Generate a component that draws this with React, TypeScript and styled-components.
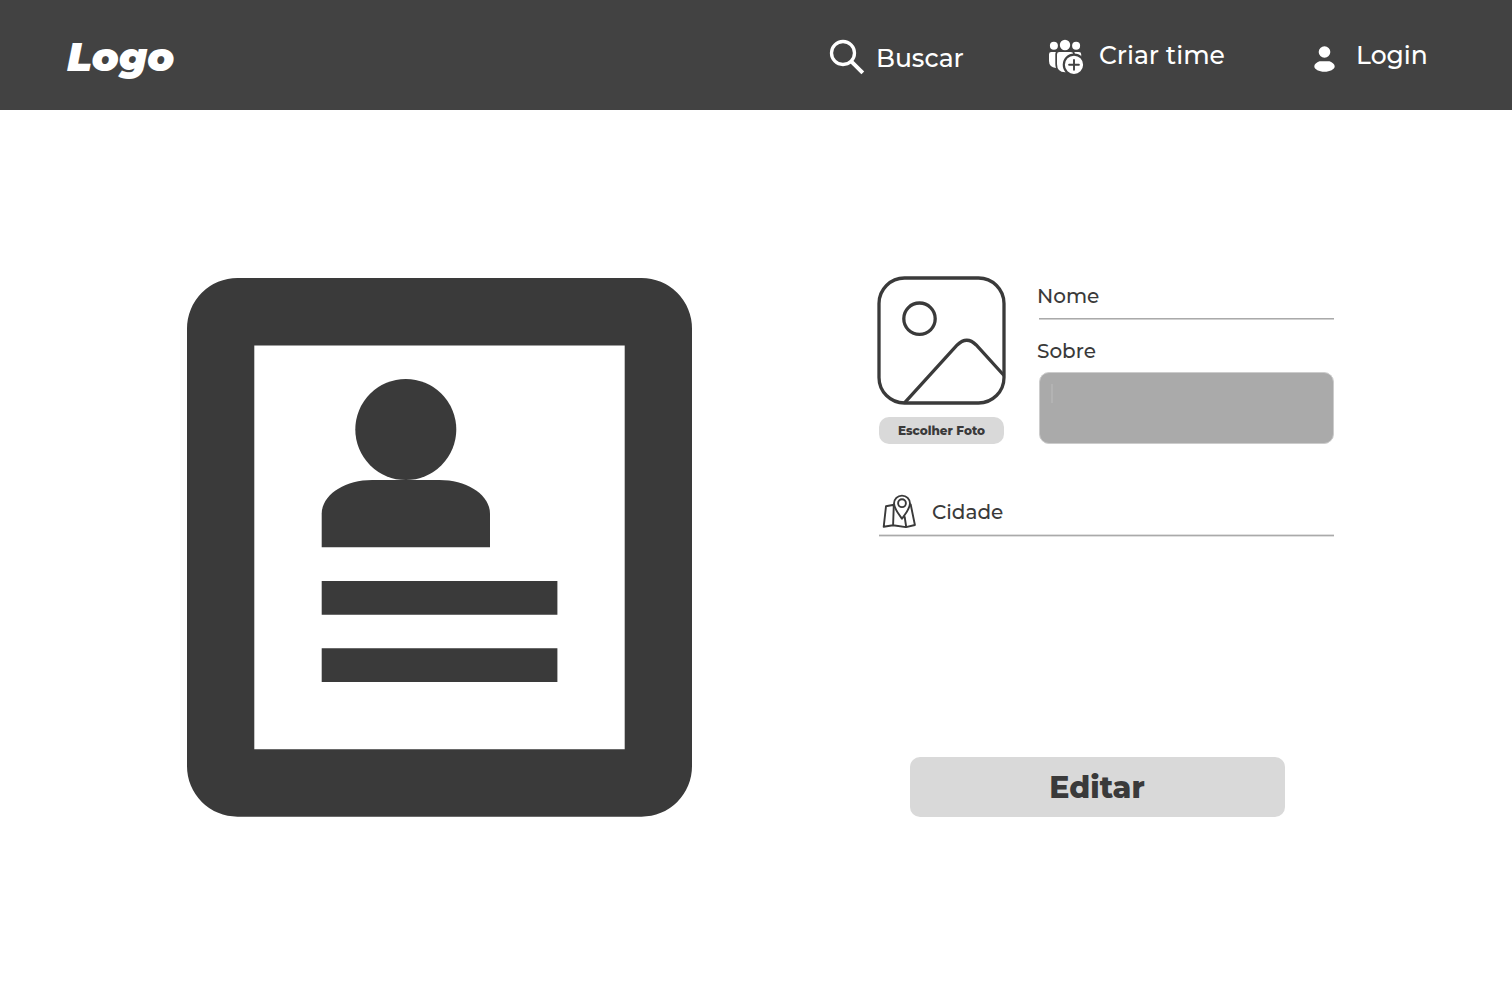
import React from "react";
import styled, { createGlobalStyle } from "styled-components";

const GlobalStyle = createGlobalStyle`
  * { box-sizing: border-box; }
  body { margin: 0; background: #fff; color: #3a3a3a; font-family: Montserrat, Inter, "Liberation Sans", sans-serif; }
`;

const Page = styled.div`
  width: 1512px;
  height: 982px;
  overflow: hidden;
  background: #fff;
`;

const Header = styled.header`
  display: flex;
  align-items: flex-start;
  height: 110px;
  padding: 0 85px 0 67px;
  background: #424242;
  color: #fff;
`;

const Logo = styled.div`
  margin-top: 32px;
  font-size: 40px;
  line-height: 49px;
  font-weight: 900;
  font-style: italic;
`;

const Nav = styled.nav`
  display: flex;
  margin-left: auto;
`;

const NavItem = styled.a<{ $width: number; $gap: number; $top: number }>`
  display: flex;
  align-items: flex-start;
  width: ${(p) => p.$width}px;
  gap: ${(p) => p.$gap}px;
  color: #fff;

  svg { flex: none; margin-top: 38px; }
  span {
    margin-top: ${(p) => p.$top}px;
    font-size: 25px;
    font-weight: 500;
    line-height: 32px;
    white-space: nowrap;
  }
`;

const Main = styled.main`
  display: flex;
  align-items: flex-start;
  padding: 166px 178px 0 187px;
  justify-content: space-between;
`;

const Card = styled.div`
  width: 505px;
  height: 539px;
  margin-top: 2px;
  svg { display: block; }
`;

const Form = styled.form`
  display: flex;
  flex-direction: column;
  width: 457px;
`;

const TopRow = styled.div`
  display: flex;
  gap: 31px;
`;

const PhotoColumn = styled.div`
  display: flex;
  flex-direction: column;
  align-items: center;
  width: 129px;
  svg { display: block; }
`;

const PhotoButton = styled.button`
  width: 125px;
  height: 27px;
  margin-top: 12px;
  padding: 0;
  border: 0;
  border-radius: 10px;
  background: #d9d9d9;
  color: #3a3a3a;
  font: 800 12px/27px Montserrat, Inter, sans-serif;
`;

const Fields = styled.div`
  display: flex;
  flex-direction: column;
  width: 297px;
`;

const Label = styled.label`
  display: block;
  font-size: 20px;
  font-weight: 500;
  line-height: 24px;
`;

const Line = styled.div`
  height: 2px;
  background: linear-gradient(#aaa 50%, #d0d0d0 50%);
`;

const CityLine = styled.div`
  height: 3px;
  border: solid #e0e0e0;
  border-width: 1px 0;
  background: #aaa;
`;

const NameField = styled.div`
  padding-top: 8px;
  ${Line} { margin: 10px 0 0 2px; }
`;

const AboutField = styled.div`
  margin-top: 19px;
`;

const AboutBox = styled.div`
  width: 295px;
  height: 72px;
  margin: 9px 0 0 2px;
  padding: 11px 11px;
  border: 1px solid #ccc;
  border-radius: 10px;
  background: #aaa;
`;

const Caret = styled.div`
  width: 2px;
  height: 19px;
  background: #b3b3b3;
`;

const CityField = styled.div`
  margin: 50px 0 0 2px;
`;

const CityRow = styled.div`
  display: flex;
  align-items: flex-start;
  gap: 16px;
  height: 40px;
  padding-left: 3px;
  ${Label} { margin-top: 6px; }
`;

const EditButton = styled.button`
  width: 375px;
  height: 60px;
  margin: 220px 0 0 33px;
  padding: 0 1px 0 0;
  border: 0;
  border-radius: 10px;
  background: #d9d9d9;
  color: #3a3a3a;
  font: 800 30px/61px Montserrat, Inter, sans-serif;
`;

const SearchIcon = () => (
  <svg width="36" height="38" viewBox="829 38 36 38" fill="none" stroke="#fff">
    <circle cx="843" cy="53" r="11.5" strokeWidth="3.3" />
    <path d="M851.2 61.3 862.8 72.9" strokeWidth="3.9" />
  </svg>
);

const TeamIcon = () => (
  <svg width="36" height="38" viewBox="1048 38 36 38" fill="#fff">
    <circle cx="1053.9" cy="45.8" r="4" />
    <circle cx="1065" cy="45" r="5.2" />
    <circle cx="1076.1" cy="45.8" r="4" />
    <path d="M1051.3 52h4.6q-.6 1-.6 2.4v9.6q0 2 .7 3.9q-7-.6-7-6.9v-6.7q0-2.3 2.3-2.3z" />
    <path d="M1059.4 52h11.4q2.4 0 2.4 2.4v9.6q0 8.2-8.1 8.2t-8.1-8.2v-9.6q0-2.4 2.4-2.4z" />
    <path d="M1074.3 52h4.6q2.3 0 2.3 2.3v6.7h-6.3v-6.6q0-1.4-.6-2.4z" />
    <circle cx="1074" cy="64.8" r="10.2" stroke="#424242" strokeWidth="2.2" />
    <path d="M1074 59.9v9.8M1069.1 64.8h9.8" stroke="#424242" strokeWidth="1.9" strokeLinecap="round" />
  </svg>
);

const UserIcon = () => (
  <svg width="22" height="38" viewBox="1314 38 22 38" fill="#fff">
    <circle cx="1324.5" cy="52" r="5.8" />
    <path d="M1319.5 61.2h10c3 1 5.2 3 5.2 5 0 3.1-4.8 5.5-10.2 5.5s-10.2-2.4-10.2-5.5c0-2 2.2-4 5.2-5z" />
  </svg>
);

const ProfileArt = () => (
  <svg width="505" height="539" viewBox="187 278 505 539" fill="#3a3a3a">
    <path
      fillRule="evenodd"
      d="M237.5 278h404a50.5 50.5 0 0 1 50.5 50.5v437.7a50.5 50.5 0 0 1-50.5 50.5h-404a50.5 50.5 0 0 1-50.5-50.5V328.5a50.5 50.5 0 0 1 50.5-50.5zM254.3 345.4v403.9h370.4V345.4z"
    />
    <circle cx="405.8" cy="429.5" r="50.5" />
    <path d="M321.7 547.3v-33.7c0-18.5 22.7-33.6 50.5-33.6h67.3c27.8 0 50.5 15.1 50.5 33.6v33.7z" />
    <path d="M321.7 581h235.7v33.7H321.7zM321.7 648.3h235.7V682H321.7z" />
  </svg>
);

const PhotoIcon = () => (
  <svg width="129" height="129" viewBox="877 276 129 129" fill="none" stroke="#3a3a3a" strokeWidth="3.3">
    <rect x="879" y="278" width="125" height="125" rx="25.5" />
    <circle cx="919.5" cy="318.7" r="15.7" />
    <path d="M904.5 402.8 957.2 345q9.7-9.5 19 0l27.8 30.5" />
  </svg>
);

const MapIcon = () => (
  <svg width="34" height="34" viewBox="882 494 34 34" fill="none" stroke="#3a3a3a" strokeWidth="1.9" strokeLinejoin="round" strokeLinecap="round">
    <path d="M894 504.8 886 506.3 883.7 526.8 893 525.2 906 527.1 914.9 525 910.7 504.5M893.8 505 893.1 525M904.7 517 906.2 527" />
    <path d="M902 518.7c-2.7-3.7-8-10-8-15.1a8 8 0 0 1 16 0c0 5.1-5.3 11.4-8 15.1z" />
    <circle cx="902" cy="503.2" r="3.9" />
  </svg>
);

export default function App() {
  return (
    <Page>
      <GlobalStyle />
      <Header>
        <Logo>Logo</Logo>
        <Nav>
          <NavItem $width={219} $gap={11} $top={42}>
            <SearchIcon />
            <span>Buscar</span>
          </NavItem>
          <NavItem $width={266} $gap={15} $top={39}>
            <TeamIcon />
            <span>Criar time</span>
          </NavItem>
          <NavItem $width={113} $gap={20} $top={39}>
            <UserIcon />
            <span>Login</span>
          </NavItem>
        </Nav>
      </Header>
      <Main>
        <Card>
          <ProfileArt />
        </Card>
        <Form>
          <TopRow>
            <PhotoColumn>
              <PhotoIcon />
              <PhotoButton type="button">Escolher Foto</PhotoButton>
            </PhotoColumn>
            <Fields>
              <NameField>
                <Label>Nome</Label>
                <Line />
              </NameField>
              <AboutField>
                <Label>Sobre</Label>
                <AboutBox>
                  <Caret />
                </AboutBox>
              </AboutField>
            </Fields>
          </TopRow>
          <CityField>
            <CityRow>
              <MapIcon />
              <Label>Cidade</Label>
            </CityRow>
            <CityLine />
          </CityField>
          <EditButton type="button">Editar</EditButton>
        </Form>
      </Main>
    </Page>
  );
}
